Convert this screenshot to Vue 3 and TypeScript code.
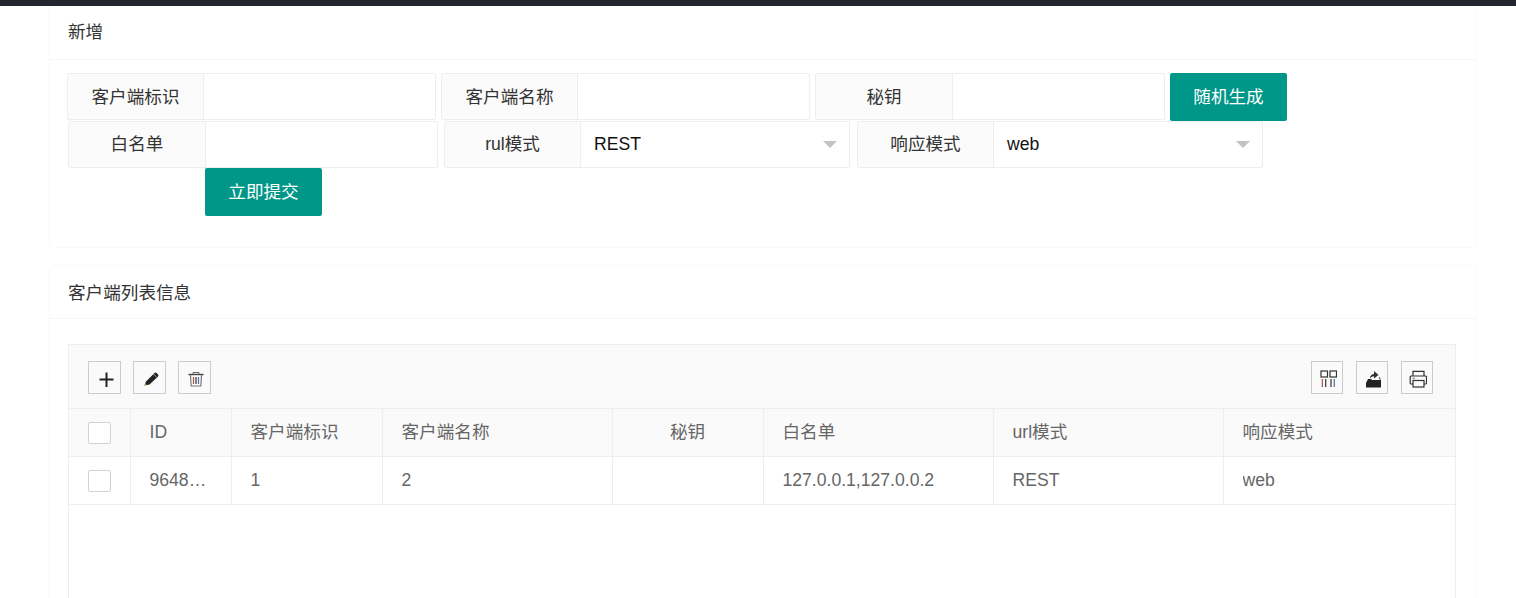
<script setup lang="ts">
import { ref } from 'vue'

const columns = [
  { key: 'id', title: 'ID', width: 101 },
  { key: 'clientId', title: '客户端标识', width: 151 },
  { key: 'clientName', title: '客户端名称', width: 230 },
  { key: 'secret', title: '秘钥', width: 151, center: true },
  { key: 'whitelist', title: '白名单', width: 230 },
  { key: 'urlMode', title: 'url模式', width: 230 },
  { key: 'respMode', title: '响应模式', width: 232 },
]

const rows = ref<Record<string, string>[]>([
  {
    id: '964812345',
    clientId: '1',
    clientName: '2',
    secret: '',
    whitelist: '127.0.0.1,127.0.0.2',
    urlMode: 'REST',
    respMode: 'web',
  },
])
</script>

<template>
  <div class="page">
    <div class="topbar"></div>
    <div class="content">
      <section class="card">
        <div class="card-header">新增</div>
        <div class="card-body form-body">
          <div class="form-row row-one">
            <div class="group w-369">
              <label class="group-label">客户端标识</label>
              <input class="group-input" type="text" />
            </div>
            <div class="group w-369">
              <label class="group-label">客户端名称</label>
              <input class="group-input" type="text" />
            </div>
            <div class="group w-350">
              <label class="group-label wide">秘钥</label>
              <input class="group-input" type="text" />
            </div>
            <button class="btn" type="button">随机生成</button>
          </div>
          <div class="form-row row-two">
            <div class="group w-370">
              <label class="group-label wide">白名单</label>
              <input class="group-input" type="text" />
            </div>
            <div class="group w-406 mid">
              <label class="group-label">rul模式</label>
              <div class="group-select">REST<i class="caret"></i></div>
            </div>
            <div class="group w-406">
              <label class="group-label">响应模式</label>
              <div class="group-select">web<i class="caret"></i></div>
            </div>
          </div>
          <div class="submit-row">
            <button class="btn" type="button">立即提交</button>
          </div>
        </div>
      </section>

      <section class="card list-card">
        <div class="card-header">客户端列表信息</div>
        <div class="card-body table-body">
          <div class="table-box">
            <div class="toolbar">
              <div class="tools">
                <span class="tool">
                  <svg width="18" height="18" viewBox="0 0 18 18"><path d="M10.500 3.500v14.500M3.500 10.500h14" stroke="#222" stroke-width="2" fill="none" /></svg>
                </span>
                <span class="tool">
                  <svg width="18" height="18" viewBox="0 0 18 18"><path d="M3.500 16.500L5 12.500 13.500 4 15 3.500 17.500 6 17 7.500 8.500 15.500z" fill="#222" /><path d="M12.500 5l3 3" stroke="#fff" stroke-width=".6" /><path d="M3.500 16.500l.8-2.200 1.400 1.400z" fill="#b5872e" /></svg>
                </span>
                <span class="tool">
                  <svg width="18" height="18" viewBox="0 0 18 18" fill="none"><path d="M2.500 5.500h15" stroke="#444" stroke-width="1.400" /><path d="M7 5V3.500h6V5" stroke="#666" stroke-width="1" /><path d="M4.500 6l.6 11h9.800l.6-11" stroke="#777" stroke-width="1.200" /><path d="M7.500 8v7" stroke="#a2554a" stroke-width="1.200" /><path d="M10 8v7" stroke="#333" stroke-width="1.200" /><path d="M12.500 8v7" stroke="#4a6ea2" stroke-width="1.200" /></svg>
                </span>
              </div>
              <div class="tools right-tools">
                <span class="tool tool-r">
                  <svg width="20" height="20" viewBox="0 0 20 20" fill="none" stroke="#333" stroke-width="1.200"><rect x="4" y="3" width="6.500" height="6" /><rect x="13" y="3" width="6.500" height="6" /><path d="M5.300 11v8" stroke="#a2554a" /><path d="M8.700 11v8" stroke="#333" /><path d="M14 11v8" stroke="#333" /><path d="M17.300 11v8" stroke="#4a6ea2" /></svg>
                </span>
                <span class="tool tool-r">
                  <svg width="20" height="20" viewBox="0 0 20 20"><path d="M4 15l2-4h3l1 1h9v7.500H4z" fill="#222" /><path d="M8 10.500C8 7.500 10 6 12 6V3l4.500 4L12 10.500V8.300C10.500 8.300 9.500 9 8 10.500z" fill="#333" /><path d="M17.500 9v2h1.500" stroke="#666" fill="none" /></svg>
                </span>
                <span class="tool tool-r">
                  <svg width="20" height="20" viewBox="0 0 20 20" fill="none" stroke="#333" stroke-width="1.200"><path d="M6 8V3.300h11V8" /><path d="M6 16H4a.8.800 0 0 1-.8-.8V9a1 1 0 0 1 1-1H18.500a1 1 0 0 1 1 1v6.200a.8.800 0 0 1-.8.800H17" /><rect x="6" y="12.500" width="11" height="6.500" /><path d="M5.500 10.300h2.500" stroke="#888" /></svg>
                </span>
              </div>
            </div>
            <table class="data-table">
              <colgroup>
                <col style="width: 61px" />
                <col v-for="c in columns" :key="c.key" :style="{ width: c.width + 'px' }" />
              </colgroup>
              <thead>
                <tr>
                  <th><span class="check"></span></th>
                  <th v-for="c in columns" :key="c.key" :class="{ center: c.center, latin: c.key === 'id' }">{{ c.title }}</th>
                </tr>
              </thead>
              <tbody>
                <tr v-for="row in rows" :key="row.id">
                  <td><span class="check"></span></td>
                  <td v-for="c in columns" :key="c.key"><div class="cell">{{ row[c.key] }}</div></td>
                </tr>
              </tbody>
            </table>
          </div>
        </div>
      </section>
    </div>
  </div>
</template>

<style scoped>
.page {
  font-family: "Liberation Sans", "Noto Sans CJK SC", sans-serif;
  font-size: 17.6px;
  color: #333;
}

.topbar {
  height: 6px;
  background: #23262e;
}

.content {
  padding: 0 40px 0 50px;
}

.card {
  border-radius: 2px;
  background: #fff;
  box-shadow: 0 0 2px rgba(0, 0, 0, 0.08);
}

.list-card {
  margin-top: 19px;
}

.card-header {
  height: 53px;
  line-height: 53px;
  padding: 0 18px;
  border-bottom: 1px solid #f6f6f6;
}

.list-card .card-header {
  height: 52px;
  line-height: 54px;
}

.form-body {
  padding: 13px 0 31px 17px;
}

.form-row {
  display: flex;
  align-items: flex-start;
}

.row-one {
  gap: 5px;
  height: 48px;
}

.row-two {
  gap: 7px;
  height: 47px;
  margin-left: 1px;
}

.group {
  display: flex;
  height: 47px;
  box-sizing: border-box;
  border: 1px solid #eee;
  border-radius: 2px;
  background: #fff;
}

.w-369 { width: 369px; }
.w-350 { width: 350px; }
.w-370 { width: 370px; }
.w-406 { width: 406px; }

.mid {
  margin-left: -1px;
}

.group-label {
  flex: 0 0 136px;
  box-sizing: border-box;
  text-align: center;
  line-height: 45px;
  background: #fbfbfb;
  border-right: 1px solid #eee;
  color: #333;
}

.row-one .group-label {
  line-height: 46px;
}

.group-label.wide {
  flex-basis: 137px;
}

.group-input {
  flex: 1;
  min-width: 0;
  border: 0;
  outline: 0;
  background: transparent;
}

.group-select {
  flex: 1;
  position: relative;
  padding-left: 13px;
  line-height: 45px;
  color: #111;
}

.caret {
  position: absolute;
  right: 12px;
  top: 19px;
  border-style: solid;
  border-width: 7px 7px 0;
  border-color: #c2c2c2 transparent transparent;
}

.btn {
  width: 117px;
  height: 48px;
  padding: 0 0 3px;
  border: 0;
  border-radius: 2px;
  background: #009688;
  color: #fff;
  font: inherit;
  cursor: pointer;
}

.submit-row {
  padding-left: 138px;
}

.table-body {
  padding: 25px 0 0 18px;
}

.table-box {
  width: 1388px;
  height: 400px;
  box-sizing: border-box;
  border: 1px solid #eee;
}

.toolbar {
  display: flex;
  justify-content: space-between;
  align-items: flex-start;
  box-sizing: border-box;
  height: 63px;
  padding: 16px 22px 0 19px;
  background: #fafafa;
}

.tools {
  display: flex;
  gap: 12px;
}

.right-tools {
  gap: 13px;
}

.tool {
  display: flex;
  align-items: center;
  justify-content: center;
  width: 33px;
  height: 33px;
  box-sizing: border-box;
  border: 1px solid #ccc;
}

.tool-r {
  width: 32px;
}

.data-table {
  table-layout: fixed;
  width: 1386px;
  border-collapse: collapse;
}

.data-table th,
.data-table td {
  box-sizing: border-box;
  height: 48px;
  padding: 0 19px;
  border: 1px solid #eee;
  border-left: 0;
  text-align: left;
  font-weight: 400;
  color: #666;
}

.data-table th {
  padding-bottom: 4px;
  background: #fafafa;
}

.data-table th.center {
  text-align: center;
}

.data-table th.latin {
  padding-bottom: 1px;
}

.data-table th:first-child,
.data-table td:first-child {
  padding: 0 19px;
  line-height: 0;
}

.cell {
  overflow: hidden;
  white-space: nowrap;
  text-overflow: ellipsis;
}

.check {
  display: block;
  width: 23px;
  height: 22px;
  box-sizing: border-box;
  border: 1px solid #d2d2d2;
  border-radius: 2px;
  background: #fff;
}
</style>

<style>
html,
body {
  margin: 0;
  overflow: hidden;
  background: #fff;
}
</style>
